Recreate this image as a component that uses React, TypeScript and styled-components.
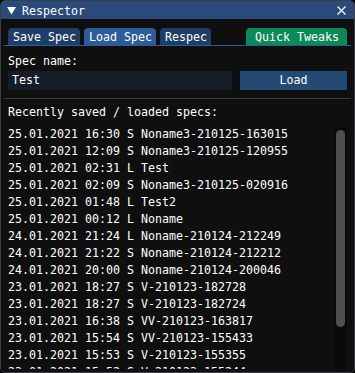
import React from "react";
import styled, { createGlobalStyle } from "styled-components";

const Global = createGlobalStyle`
  html, body { margin: 0; padding: 0; background: #000; }
  * { box-sizing: border-box; }
`;

const FONT = `"DejaVu Sans Mono", "Liberation Mono", monospace`;

const Window = styled.div`
  width: 355px;
  height: 373px;
  display: flex;
  flex-direction: column;
  background: #0f0f0f;
  border: 1px solid #3c3c45;
  border-radius: 5px;
  overflow: hidden;
  font-family: ${FONT};
  font-size: 11.63px;
  line-height: 13px;
  color: #ffffff;
`;

const TitleBar = styled.div`
  height: 18px;
  background: #294a7a;
  display: flex;
  align-items: center;
  padding: 1px 0 0 6px;
  flex-shrink: 0;
`;

const TitleText = styled.span`
  margin-left: 6px;
  line-height: 18px;
`;

const CloseBtn = styled.div`
  margin-left: auto;
  width: 20px;
  height: 18px;
  display: flex;
  align-items: center;
  justify-content: center;
  margin-right: 3px;
`;

const Content = styled.div`
  flex: 1;
  min-height: 0;
  display: flex;
  flex-direction: column;
  padding: 9px 7px 3px 7px;
`;

const TabBar = styled.div`
  display: flex;
  gap: 4px;
  margin: 0 -4px;
  padding: 0 4px;
  border-bottom: 1px solid #2d5c98;
  height: 18px;
`;

const Tab = styled.div<{ $active?: boolean; $green?: boolean }>`
  height: 17px;
  padding: 3px 4px 1px 5px;
  border-radius: 4px 4px 0 0;
  white-space: pre;
  background: ${(p) => (p.$green ? "#0b8a57" : p.$active ? "#2d5c98" : "#1f3e67")};
`;

const RightTab = styled(Tab)`
  margin-left: auto;
  padding: 3px 8px 1px 9px;
`;

const Label = styled.div`
  margin-top: 9px;
  white-space: pre;
`;

const InputRow = styled.div`
  margin-top: 3px;
  display: grid;
  grid-template-columns: 224px 1fr;
  gap: 8px;
  height: 19px;
`;

const Input = styled.div`
  background: #161d29;
  padding-left: 4px;
  line-height: 19px;
`;

const Button = styled.div`
  background: #234a73;
  line-height: 19px;
  text-align: center;
`;

const Separator = styled.div`
  margin: 8px -4px 0 -4px;
  height: 1px;
  background: #3c3c45;
`;

const Heading = styled.div`
  margin-top: 7px;
  white-space: pre;
`;

const ListArea = styled.div`
  margin-top: 9px;
  flex: 1;
  min-height: 0;
  display: flex;
  overflow: hidden;
`;

const Rows = styled.div`
  flex: 1;
  display: flex;
  flex-direction: column;
  gap: 4px;
  overflow: hidden;
`;

const Row = styled.div`
  white-space: pre;
  flex-shrink: 0;
`;

const Scrollbar = styled.div`
  width: 14px;
  flex-shrink: 0;
  background: #0a0a0a;
  padding: 2px 2px 0 3px;
`;

const Grab = styled.div`
  height: 197px;
  border-radius: 5px;
  background: #4f4f4f;
`;

const rows = [
  "25.01.2021 16:30 S Noname3-210125-163015",
  "25.01.2021 12:09 S Noname3-210125-120955",
  "25.01.2021 02:31 L Test",
  "25.01.2021 02:09 S Noname3-210125-020916",
  "25.01.2021 01:48 L Test2",
  "25.01.2021 00:12 L Noname",
  "24.01.2021 21:24 L Noname-210124-212249",
  "24.01.2021 21:22 S Noname-210124-212212",
  "24.01.2021 20:00 S Noname-210124-200046",
  "23.01.2021 18:27 S V-210123-182728",
  "23.01.2021 18:27 S V-210123-182724",
  "23.01.2021 16:38 S VV-210123-163817",
  "23.01.2021 15:54 S VV-210123-155433",
  "23.01.2021 15:53 S V-210123-155355",
  "23.01.2021 15:52 S V-210123-155244",
];

export default function App() {
  return (
    <>
      <Global />
      <Window>
        <TitleBar>
          <svg width="9" height="8" viewBox="0 0 9 8">
            <polygon points="0,0 9,0 4.5,7.5" fill="#fff" />
          </svg>
          <TitleText>Respector</TitleText>
          <CloseBtn>
            <svg width="9" height="9" viewBox="0 0 9 9">
              <path d="M0.5 0.5 L8.5 8.5 M8.5 0.5 L0.5 8.5" stroke="#fff" strokeWidth="1.2" />
            </svg>
          </CloseBtn>
        </TitleBar>
        <Content>
          <TabBar>
            <Tab>Save Spec</Tab>
            <Tab $active>Load Spec</Tab>
            <Tab>Respec</Tab>
            <RightTab $green>Quick Tweaks</RightTab>
          </TabBar>
          <Label>Spec name:</Label>
          <InputRow>
            <Input>Test</Input>
            <Button>Load</Button>
          </InputRow>
          <Separator />
          <Heading>Recently saved / loaded specs:</Heading>
          <ListArea>
            <Rows>
              {rows.map((r, i) => (
                <Row key={i}>{r}</Row>
              ))}
            </Rows>
            <Scrollbar>
              <Grab />
            </Scrollbar>
          </ListArea>
        </Content>
      </Window>
    </>
  );
}
